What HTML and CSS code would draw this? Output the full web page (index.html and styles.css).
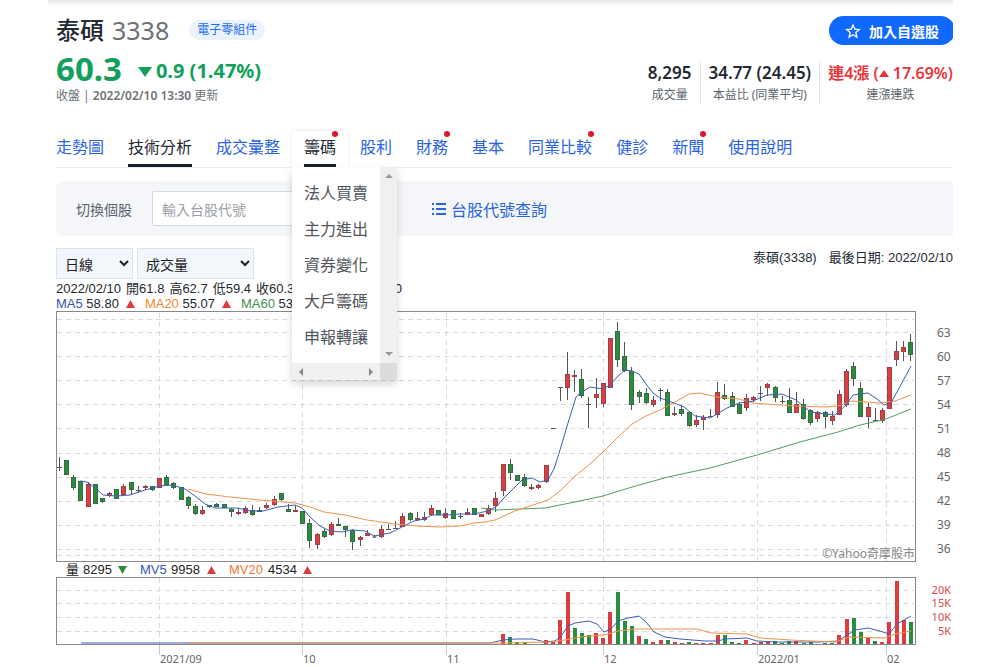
FILE: index.html
```html
<!DOCTYPE html>
<html lang="zh-Hant">
<head>
<meta charset="utf-8">
<meta name="viewport" content="width=device-width, initial-scale=1">
<title>泰碩 (3338) 技術分析</title>
<link rel="stylesheet" href="styles.css">
</head>
<body>
<main class="page">
  <header class="quote">
    <div class="quote-main">
      <div class="title-row">
        <h1 class="name">泰碩</h1>
        <span class="code">3338</span>
        <a class="sector" href="#">電子零組件</a>
      </div>
      <div class="price-row">
        <span class="price">60.3</span>
        <svg class="down" viewBox="0 0 14 10" aria-hidden="true"><path d="M0 0h14L7 10z"/></svg>
        <span class="change">0.9 (1.47%)</span>
      </div>
      <p class="updated">收盤 | <b>2022/02/10 13:30</b> 更新</p>
    </div>
    <div class="quote-side">
      <button class="follow" type="button">
        <svg class="star" viewBox="0 0 24 24" aria-hidden="true"><path d="M12 3l2.7 6.3 6.8.6-5.200 4.500 1.600 6.700L12 17.500l-5.900 3.600 1.600-6.700-5.200-4.500 6.800-.6z"/></svg>
        加入自選股
      </button>
      <ul class="stats">
        <li><strong>8,295</strong><span>成交量</span></li>
        <li><strong>34.77 (24.45)</strong><span>本益比 (同業平均)</span></li>
        <li class="rise"><strong>連4漲 (<svg class="up" viewBox="0 0 10 7" aria-hidden="true"><path d="M0 7h10L5 0z"/></svg> 17.69%)</strong><span>連漲連跌</span></li>
      </ul>
    </div>
  </header>

  <nav class="tabs" aria-label="個股">
    <a href="#">走勢圖</a>
    <a class="current" href="#">技術分析</a>
    <a href="#">成交彙整</a>
    <div class="open">
      <a class="current dot" href="#">籌碼</a>
      <div class="menu">
        <div class="menu-list">
          <a href="#">法人買賣</a>
          <a href="#">主力進出</a>
          <a href="#">資券變化</a>
          <a href="#">大戶籌碼</a>
          <a href="#">申報轉讓</a>
        </div>
        <div class="bar-v">
          <svg viewBox="0 0 8 4" aria-hidden="true"><path d="M0 4h8L4 0z"/></svg>
          <svg viewBox="0 0 8 4" aria-hidden="true"><path d="M0 0h8L4 4z"/></svg>
        </div>
        <div class="bar-h">
          <svg viewBox="0 0 4 8" aria-hidden="true"><path d="M4 0v8L0 4z"/></svg>
          <svg viewBox="0 0 4 8" aria-hidden="true"><path d="M0 0v8l4-4z"/></svg>
        </div>
        <div class="corner"></div>
      </div>
    </div>
    <a href="#">股利</a>
    <a class="dot" href="#">財務</a>
    <a href="#">基本</a>
    <a class="dot" href="#">同業比較</a>
    <a href="#">健診</a>
    <a class="dot" href="#">新聞</a>
    <a href="#">使用說明</a>
  </nav>

  <form class="switch">
    <label for="stock">切換個股</label>
    <input id="stock" type="text" placeholder="輸入台股代號">
    <a href="#"><svg viewBox="0 0 14 12" aria-hidden="true"><path d="M0 1h2M4 1h10M0 6h2M4 6h10M0 11h2M4 11h10"/></svg>台股代號查詢</a>
  </form>

  <section class="chart">
    <div class="chart-tools">
      <select class="period" aria-label="週期"><option>日線</option></select>
      <select class="indicator" aria-label="指標"><option>成交量</option></select>
      <p class="last-date"><span>泰碩(3338)</span><span>最後日期: 2022/02/10</span></p>
    </div>
    <p class="legend values"><span>2022/02/10</span><span>開61.8</span><span>高62.7</span><span>低59.4</span><span>收60.3</span><span>量8295</span><span>漲跌-0.90</span></p>
    <p class="legend averages">
      <span><i class="blue">MA5</i> 58.80</span><svg viewBox="0 0 9 8" aria-hidden="true"><path d="M0 8h9L4.500 0z"/></svg>
      <span><i class="orange">MA20</i> 55.07</span><svg viewBox="0 0 9 8" aria-hidden="true"><path d="M0 8h9L4.500 0z"/></svg>
      <span><i class="green">MA60</i> 53.34</span>
    </p>
    <svg class="plot" id="plot" viewBox="56 311 897 356" role="img" aria-label="日線與成交量"></svg>
  </section>
</main>
<script src="chart.js"></script>
</body>
</html>
```
FILE: styles.css
```css
* { box-sizing: border-box; }
body {
  margin: 0;
  background: #fff;
  color: #232a31;
  font-family: "Noto Sans", "Noto Sans CJK TC", sans-serif;
  font-size: 16px;
}
h1, p, ul { margin: 0; padding: 0; }
a { color: #2a64dc; text-decoration: none; }
.page {
  margin: 0 47px 0 48px;
  padding: 16px 0 0 8px;
  overflow: hidden;
  background: linear-gradient(#e6e6e6, #fff) 0 0 / 100% 6px no-repeat;
}

.quote { display: flex; justify-content: space-between; margin-right: -2px; height: 115px; }
.title-row { display: flex; align-items: center; height: 28px; }
.name { font-size: 24px; font-weight: 500; line-height: 28px; }
.code { margin-left: 8px; font-size: 25px; line-height: 28px; color: #6c7075; }
.sector {
  margin-left: 20px;
  padding: 0 8px;
  border-radius: 10px;
  background: #eaf3ff;
  color: #1f6fee;
  font-size: 12px;
  line-height: 20px;
}
.price-row { display: flex; align-items: center; height: 44px; padding-top: 5px; color: #13a05a; font-weight: 700; }
.price { font-size: 33px; line-height: 38px; }
.down { width: 14px; height: 10px; margin: 6px 4px 0 16px; fill: currentColor; }
.change { padding-top: 5px; font-size: 20px; line-height: 28px; font-weight: 700; }
.updated { color: #6e7276; font-size: 12px; line-height: 16px; }
.updated b { font-weight: 600; }

.quote-side { display: flex; flex-direction: column; align-items: flex-end; gap: 16px; }
.follow {
  display: flex;
  align-items: center;
  gap: 8px;
  height: 29px;
  padding: 0 16px;
  border: 0;
  border-radius: 15px;
  background: #0f69ff;
  color: #fff;
  font: 700 14px "Noto Sans CJK TC", sans-serif;
}
.star { width: 16px; height: 16px; fill: none; stroke: #fff; stroke-width: 2; }
.stats { display: flex; list-style: none; }
.stats li { display: flex; flex-direction: column; align-items: center; padding: 0 8px; white-space: nowrap; }
.stats li + li { border-left: 1px solid #e0e4e9; }
.stats li:last-child { padding-right: 2px; }
.stats strong { font-size: 17px; line-height: 24px; font-weight: 600; }
.stats span { font-size: 12px; line-height: 20px; color: #5b636a; }
.stats .rise strong { color: #eb333a; font-size: 16px; }
.up { width: 10px; height: 7px; fill: currentColor; vertical-align: 2px; }

.tabs { display: flex; gap: 24px; height: 37px; border-bottom: 1px solid #e8ebee; white-space: nowrap; }
.tabs > a, .open > a { position: relative; height: 36px; line-height: 32px; }
.tabs a.current { color: #232a31; border-bottom: 3px solid #1d2228; }
.dot::after {
  content: "";
  position: absolute;
  top: 0;
  right: -2px;
  width: 6px;
  height: 6px;
  border-radius: 50%;
  background: #e0162b;
}
.open {
  position: relative;
  display: flex;
  margin: 0 -12px;
  padding: 0 12px;
  background: #fff;
  box-shadow: 0 -1px 4px rgba(0, 0, 0, .08);
}
.menu {
  position: absolute;
  z-index: 2;
  top: 36px;
  left: 0;
  display: grid;
  grid-template-columns: 88px 17px;
  grid-template-rows: auto 17px;
  background: #fff;
  box-shadow: 0 4px 8px rgba(0, 0, 0, .16);
}
.menu-list { display: flex; flex-direction: column; padding: 8px 0 8px 12px; }
.menu-list a { color: #50565c; line-height: 36px; }
.bar-v { display: flex; flex-direction: column; justify-content: space-between; align-items: center; padding: 7px 0; background: #f0f0f0; }
.bar-h { display: flex; justify-content: space-between; align-items: center; padding: 0 7px; background: #f0f0f0; }
.bar-v svg { width: 8px; height: 4px; fill: #999; }
.bar-h svg { width: 4px; height: 8px; fill: #888; }
.corner { background: #dcdcdc; }

.switch {
  display: flex;
  align-items: center;
  height: 55px;
  margin-top: 13px;
  padding-left: 20px;
  border-radius: 8px 0 0 8px;
  background: #f4f6fa;
}
.switch label { font-size: 14px; color: #5b636a; }
.switch input {
  width: 232px;
  height: 35px;
  margin-left: 20px;
  padding: 0 9px;
  border: 1px solid #d5dae0;
  border-radius: 2px;
  background: #fff;
  font: 14px "Noto Sans CJK TC", sans-serif;
}
.switch input::placeholder { color: #9a9fa5; }
.switch a { display: flex; align-items: center; gap: 5px; margin-left: 48px; }
.switch svg { width: 14px; height: 12px; fill: none; stroke: currentColor; stroke-width: 2; }

.chart { margin-top: 12px; font-family: "Liberation Sans", "Noto Sans CJK TC", sans-serif; font-size: 13px; }
.chart-tools { display: flex; gap: 4px; height: 33px; }
.chart-tools select {
  height: 31px;
  padding: 0 0 0 4px;
  border: 1px solid #dbe3ec;
  border-radius: 0;
  background: #f3f7fb;
  color: #1d2228;
  font: 14px "Noto Sans CJK TC", sans-serif;
}
.chart-tools .period { width: 77px; }
.chart-tools .indicator { width: 117px; }
.last-date { display: flex; gap: 12px; margin-left: auto; line-height: 20px; white-space: nowrap; }
.legend { display: flex; line-height: 15px; white-space: nowrap; }
.values { gap: 5px; }
.averages { align-items: center; }
.averages svg { width: 9px; height: 8px; margin: 0 10px 0 7px; fill: #e03a3e; }
.averages i { font-style: normal; }
.legend .blue { color: #3557b0; }
.legend .orange { color: #f58634; }
.legend .green { color: #43904d; }

.plot { display: block; width: 100%; height: auto; }
.frame { fill: none; stroke: #888; }
.grid { stroke: #dadada; stroke-dasharray: 5 4; fill: none; }
.tick { stroke: #ccc; }
.wick { stroke: #555; }
.candle { stroke-width: 1; }
.candle.fill-r { stroke: #984449; }
.candle.fill-g { stroke: #396b43; }
.fill-r { fill: #dc3d43; }
.fill-g { fill: #2a8c3f; }
.fill-k { fill: #444; }
.line { fill: none; stroke-width: 1; stroke-linejoin: round; }
.line-blue { stroke: #3c5fb8; }
.line-orange { stroke: #f29148; }
.line-green { stroke: #4f9e61; }
.axis { font: 12px "Noto Sans", sans-serif; fill: #666; }
.axis-date { font-size: 11px; }
.axis-volume { font-size: 11px; fill: #e0474c; text-anchor: end; }
.plot-text { font-size: 13px; fill: #222; }
.plot-text.blue { fill: #3557b0; }
.plot-text.orange { fill: #f07a35; }
.watermark { font: 12px "Noto Sans", "Noto Sans CJK TC", sans-serif; fill: #888; text-anchor: end; }
```
FILE: chart.js
```js
const NS = "http://www.w3.org/2000/svg";
const plot = document.getElementById("plot");
const FIRST = 59.5, STEP = 7.155;

function add(tag, cls, attrs, text) {
  const el = document.createElementNS(NS, tag);
  el.setAttribute("class", cls);
  for (const key in attrs) el.setAttribute(key, attrs[key]);
  if (text) el.textContent = text;
  plot.appendChild(el);
}

function line(cls, x1, y1, x2, y2) {
  add("line", cls, { x1, y1, x2, y2 });
}

// Each candle: body top, body bottom, high, low, colour.
const candles = `467 467 457 471 k|460 475 460 475 g|477 488 475 490 g|481 501 481 501 g|484 507 482 507 r|484 504 484 504 g
498 502 498 503 g|493 496 492 497 r|489 499 489 499 g|486 495 484 496 r|482 490 482 494 g|490 490 486 493 k|486 488 485 490 r|486 490 486 491 g
478 488 478 488 r|477 485 475 486 g|483 488 482 489 g|487 500 487 500 g|497 506 496 509 g|506 514 504 515 g|510 514 506 515 r|505 507 505 508 g
504 507 503 507 g|504 508 504 508 g|509 512 508 517 g|512 514 508 515 r|508 513 506 514 r|510 515 505 516 g|510 512 507 512 g|505 508 503 509 r
499 505 496 506 r|493 500 493 501 g|509 512 504 512 g|510 512 505 512 r|511 524 511 524 g|523 541 519 548 g|534 545 533 549 r|531 537 529 538 g
524 535 522 536 r|524 526 518 526 g|526 530 526 537 g|530 542 529 550 g|537 540 536 546 r|533 536 530 536 r|536 538 535 538 k|529 537 525 538 r
529 529 524 530 k|528 528 521 528 k|516 527 513 527 r|513 520 512 521 g|518 520 512 521 r|517 520 512 521 r|508 515 505 516 r|510 515 510 515 g
513 518 508 519 r|510 519 510 519 g|516 516 513 519 k|512 515 508 515 r|508 515 508 515 g|514 517 514 517 r|508 514 505 515 r|498 506 492 512 r
464 491 464 496 r|464 473 459 480 g|475 481 475 481 g|477 486 474 487 g|487 489 484 490 r|485 488 484 489 r|465 482 465 483 r|428 428 428 428 k
387 387 387 401 k|374 388 352 400 r|375 377 370 392 r|379 396 369 398 g|404 404 397 428 k|394 398 378 408 r|383 404 383 407 r|338 388 338 388 r
331 360 322 367 g|356 371 342 372 g|371 405 367 410 g|392 397 390 403 g|393 403 388 404 g|400 405 396 407 r|390 390 388 401 k|392 416 389 416 g
413 415 407 416 r|409 414 405 416 g|412 426 411 427 g|420 425 415 427 r|417 420 415 430 r|416 416 409 417 k|392 415 382 418 r|395 399 384 400 g
396 407 392 407 g|404 414 402 414 g|398 408 394 411 r|397 400 396 402 r|393 393 386 401 k|384 388 383 396 r|387 398 386 402 g|401 401 396 404 k
400 413 388 413 g|404 413 392 413 r|404 419 399 420 g|410 423 409 425 g|412 419 411 422 r|412 417 411 428 g|416 421 411 425 r|394 415 390 415 r
371 405 369 407 r|366 379 362 386 g|388 417 382 417 g|407 417 403 428 r|420 420 408 421 k|410 421 408 423 r|367 409 367 409 r|351 360 341 366 r
347 352 341 361 r|342 355 334 361 g`.split(/[|\n]/).map(row => row.split(" "));

// Volume bars: candle index, bar top, colour.
const volumes = `62 634 r|63 637 g|64 642 g|65 642 g|68 640 r|69 642 r|70 620 r|71 592 r|72 628 g|73 633 g|74 635 g|75 633 r|76 638 r|77 612 r|78 592 g|79 621 g|80 626 g|81 636 r|82 639 g|83 642 r|84 640 r|85 640 g|86 642 r|87 643 r|88 642 g|89 643 r|90 643 r|91 643 r|92 635 r|93 635 g|94 642 g|95 643 g|96 640 r|97 643 r|98 642 r|99 641 r|100 641 g|101 643 g|102 641 g|103 641 r|104 643 g|105 642 g|107 643 g|108 643 g|109 635 r|110 619 r|111 618 g|112 632 g|113 638 r|114 641 g|115 642 r|116 622 r|117 581 r|118 620 r|119 622 g`.split("|").map(row => row.split(" "));

for (const y of [319, 332, 356, 380, 404, 428, 453, 477, 501, 525, 549, 555, 590, 603, 617, 631])
  line("grid", 57, y + .5, 914, y + .5);
const months = [[159, "2021/09"], [302, "10"], [446, "11"], [603, "12"], [757, "2022/01"], [886, "02"]];
for (const [x, label] of months) {
  line("grid", x + .5, 313, x + .5, 561);
  line("grid", x + .5, 578, x + .5, 644);
  line("tick", x + .5, 645, x + .5, 655);
  add("text", "axis axis-date", { x: x + 1, y: 663 }, label);
}

candles.forEach(([top, bottom, high, low, colour], i) => {
  const x = Math.round(FIRST + i * STEP - .5) + .5;
  line("wick", x, +high, x, +low);
  if (top === bottom) line("wick", x - 2.5, +top + .5, x + 2.5, +top + .5);
  else add("rect", "candle fill-" + colour, { x: x - 2, y: +top + .5, width: 4, height: bottom - top - 1 });
});
for (const [i, top, colour] of volumes)
  add("rect", "fill-" + colour, { x: Math.round(FIRST + i * STEP - 2), y: top, width: 4, height: 645 - top });

const series = [
  ["green", "481,508 495,510 545,508 570,503 603,496 632,487 668,477 710,468 757,455 800,442 838,432 860,425 886,419 911,409"],
  ["orange", "188,489 206,494 230,497 260,500 295,503 310,507 324,512 345,515 367,520 395,524 417,526 440,527 460,526 474,523 485,522 495,520 515,511 548,500 560,491 575,476 590,464 603,452 617,438 632,424 646,416 660,410 675,402 689,394 700,393 717,397 739,399 753,403 765,404 796,406 825,407 838,406 852,401 880,403 895,401 911,395"],
  ["blue", "80,481 87,482 94,487 103,495 116,496 130,495 145,490 160,486 173,485 185,489 195,496 205,504 215,508 238,508 250,511 263,511 278,507 295,505 302,508 310,517 320,526 330,531 342,532 352,530 365,531 374,536 390,533 402,527 414,521 424,519 432,515 446,515 460,514 474,514 488,511 497,506 503,499 512,490 522,480 532,478 540,482 548,480 554,469 560,450 568,423 576,397 582,392 590,387 603,389 610,385 617,377 625,370 632,371 639,374 646,384 653,393 660,398 674,403 684,407 695,416 710,418 717,414 727,408 739,403 753,401 767,395 782,394 796,400 803,406 811,412 825,414 835,415 846,405 853,395 868,393 877,399 884,405 891,403 911,366"],
  ["blue", "81,643 490,643 503,640 515,639 533,639 545,642 555,641 561,636 568,626 575,623 589,621 597,624 604,632 611,629 618,621 628,618 639,616 646,622 654,632 665,637 680,639 705,641 718,641 725,639 747,638 757,641 775,642 820,642 838,641 847,635 855,630 868,628 880,631 889,634 897,624 911,616"],
  ["orange", "188,643 500,643 550,642 565,640 580,637 604,635 618,631 635,629 697,629 711,633 747,634 760,638 790,640 835,642 850,637 885,638 895,634 911,631"]
];
for (const [colour, points] of series) add("polyline", "line line-" + colour, { points });

add("rect", "frame", { x: 56.5, y: 311.5, width: 859, height: 250 });
add("rect", "frame", { x: 56.5, y: 577.5, width: 859, height: 67 });

[63, 60, 57, 54, 51, 48, 45, 42, 39, 36].forEach((v, i) =>
  add("text", "axis", { x: 937, y: 337 + i * 24 }, String(v)));
[["20K", 594], ["15K", 607], ["10K", 621], ["5K", 635]].forEach(([v, y]) =>
  add("text", "axis axis-volume", { x: 951, y }, v));

add("text", "watermark", { x: 915, y: 558 }, "©Yahoo奇摩股市");
const legend = [[66, "量"], [83, "8295"], [140, "MV5", "blue"], [171, "9958"], [229, "MV20", "orange"], [268, "4534"]];
for (const [x, label, colour] of legend) add("text", "plot-text " + (colour || ""), { x, y: 574 }, label);
add("path", "fill-g", { d: "M118 566h9l-4.500 8z" });
add("path", "fill-r", { d: "M207 574h9l-4.500 -8z" });
add("path", "fill-r", { d: "M303 574h9l-4.500 -8z" });
```
